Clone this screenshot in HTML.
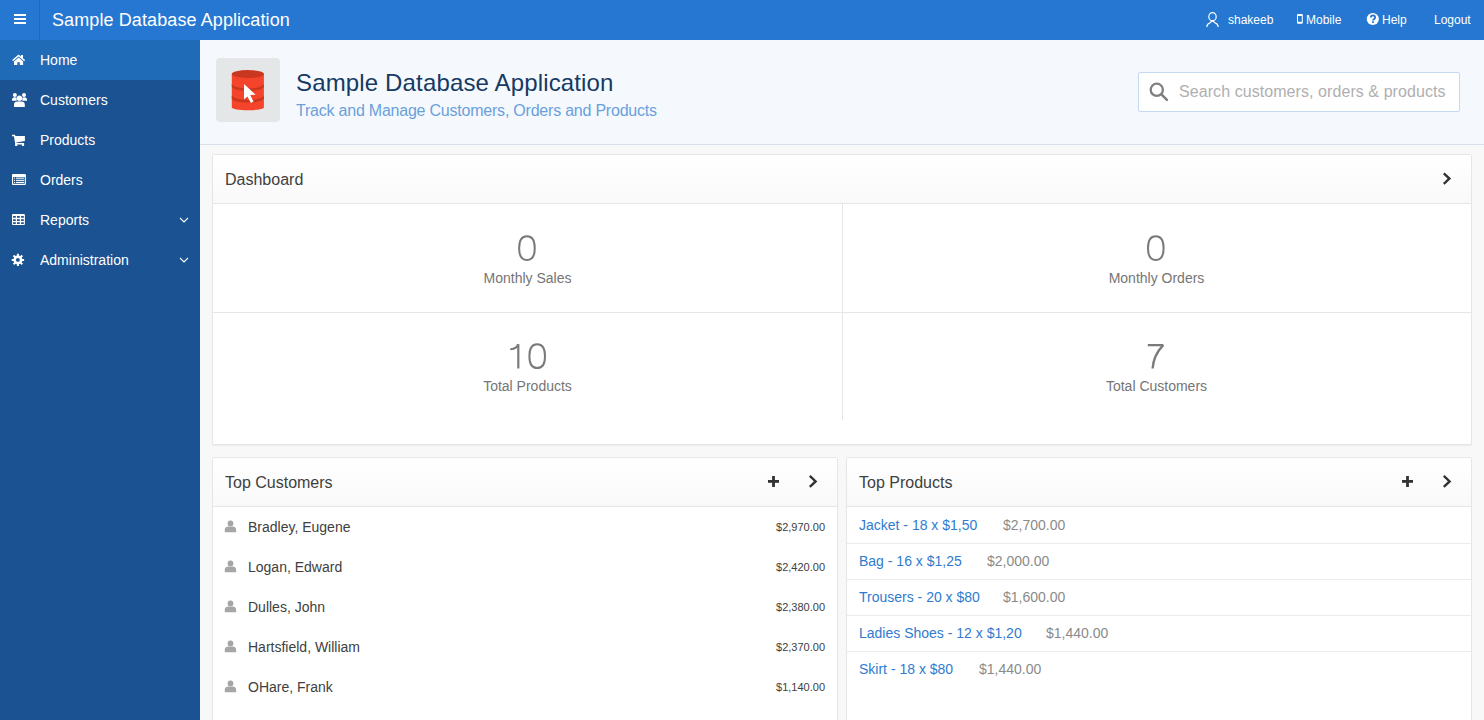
<!DOCTYPE html>
<html><head><meta charset="utf-8">
<style>
*{box-sizing:border-box;margin:0;padding:0}
html,body{width:1484px;height:720px;overflow:hidden}
body{font-family:"Liberation Sans",sans-serif;background:#f8f8f8;position:relative;color:#404040}
.abs{position:absolute}
#hdr{left:0;top:0;width:1484px;height:40px;background:#2577d1}
#hamb{left:0;top:0;width:39px;height:40px}
#hamb i{position:absolute;left:14px;width:12px;height:2px;background:#fff}
#hsep{left:39px;top:0;width:1px;height:40px;background:#2169bd}
#htitle{left:52px;top:9px;font-size:18px;color:#fff;line-height:22px;white-space:nowrap;letter-spacing:0.1px}
.nav{top:12px;font-size:12px;color:#fff;line-height:16px;white-space:nowrap}
#side{left:0;top:40px;width:200px;height:680px;background:#1b5291}
.si{position:absolute;left:0;width:200px;height:40px;color:#fff;font-size:14px;line-height:40px}
.si span{position:absolute;left:40px;top:0}
.si.act{background:#206bb8}
.si svg{position:absolute}
#hero{left:200px;top:40px;width:1284px;height:105px;background:#f5f9fe;border-bottom:1px solid #d9dfe6}
#ibox{left:216px;top:58px;width:64px;height:64px;border-radius:4px;background:#e4e6e8}
#t1{left:296px;top:68px;font-size:24px;color:#163a62;line-height:30px;white-space:nowrap;letter-spacing:0.15px}
#t2{left:296px;top:101px;font-size:16px;color:#6aa0da;line-height:20px;white-space:nowrap;letter-spacing:-0.22px}
#search{left:1138px;top:72px;width:322px;height:40px;background:#fff;border:1px solid #c5d9f1;border-radius:2px}
#search span{position:absolute;left:40px;top:9px;font-size:16px;color:#afafaf;letter-spacing:0.07px;line-height:20px;white-space:nowrap}
.reg{position:absolute;background:#fff;border:1px solid #e6e6e6;border-radius:2px;box-shadow:0 1px 1px rgba(0,0,0,.05)}
.rh{position:absolute;left:0;top:0;right:0;height:49px;background:linear-gradient(#fff,#f9f9f9);border-bottom:1px solid #e6e6e6}
.rh span{position:absolute;left:12px;top:15px;font-size:16px;line-height:20px;color:#404040;white-space:nowrap}
.big{position:absolute;width:629px;text-align:center;color:#757575}
.big.lbl{font-size:14px;line-height:18px}
.big b{display:block;font-weight:normal;font-size:36px;line-height:36px}
.big span{display:block;font-size:14px;line-height:18px}
.cust{position:absolute;left:35px;font-size:14px;color:#404040;line-height:18px;white-space:nowrap}
.amt{position:absolute;right:12px;font-size:11px;color:#404040;line-height:14px;white-space:nowrap}
.prow{position:absolute;left:0;right:0;height:36px;border-bottom:1px solid #ebebeb}
.prow a{position:absolute;left:12px;top:8px;font-size:14px;color:#2f7bcf;line-height:18px;text-decoration:none;white-space:nowrap}
.prow span{position:absolute;top:8px;font-size:14px;color:#8a8a8a;line-height:18px;white-space:nowrap}
</style></head><body>
<div id="hdr" class="abs"></div>
<div id="hamb" class="abs"><i style="top:14px"></i><i style="top:18px"></i><i style="top:22px"></i></div>
<div id="hsep" class="abs"></div>
<div id="htitle" class="abs">Sample Database Application</div>
<div class="abs nav" style="left:1228px">shakeeb</div>
<div class="abs nav" style="left:1306px">Mobile</div>
<div class="abs nav" style="left:1382px">Help</div>
<div class="abs nav" style="left:1434px">Logout</div>

<div id="side" class="abs">
 <div class="si act" style="top:0"><span>Home</span></div>
 <div class="si" style="top:40px"><span>Customers</span></div>
 <div class="si" style="top:80px"><span>Products</span></div>
 <div class="si" style="top:120px"><span>Orders</span></div>
 <div class="si" style="top:160px"><span>Reports</span></div>
 <div class="si" style="top:200px"><span>Administration</span></div>
</div>

<div id="hero" class="abs"></div>
<div id="ibox" class="abs"></div>
<div id="t1" class="abs">Sample Database Application</div>
<div id="t2" class="abs">Track and Manage Customers, Orders and Products</div>
<div id="search" class="abs"><span>Search customers, orders &amp; products</span></div>

<div class="reg" style="left:212px;top:154px;width:1260px;height:291px">
 <div class="rh"><span>Dashboard</span></div>
 <div class="abs" style="left:629px;top:49px;width:1px;height:216px;background:#e6e6e6"></div>
 <div class="abs" style="left:0;top:157px;width:1258px;height:1px;background:#e6e6e6"></div>
 <div class="big lbl" style="left:0;top:114px">Monthly Sales</div>
 <div class="big lbl" style="left:629px;top:114px">Monthly Orders</div>
 <div class="big lbl" style="left:0;top:222px">Total Products</div>
 <div class="big lbl" style="left:629px;top:222px">Total Customers</div>
</div>

<div class="reg" style="left:212px;top:457px;width:626px;height:300px">
 <div class="rh"><span>Top Customers</span></div>
 <div class="cust" style="top:60px">Bradley, Eugene</div><div class="amt" style="top:62px">$2,970.00</div>
 <div class="cust" style="top:100px">Logan, Edward</div><div class="amt" style="top:102px">$2,420.00</div>
 <div class="cust" style="top:140px">Dulles, John</div><div class="amt" style="top:142px">$2,380.00</div>
 <div class="cust" style="top:180px">Hartsfield, William</div><div class="amt" style="top:182px">$2,370.00</div>
 <div class="cust" style="top:220px">OHare, Frank</div><div class="amt" style="top:222px">$1,140.00</div>
</div>

<div class="reg" style="left:846px;top:457px;width:626px;height:300px">
 <div class="rh"><span>Top Products</span></div>
 <div class="prow" style="top:50px"><a>Jacket - 18 x $1,50</a><span style="left:156px">$2,700.00</span></div>
 <div class="prow" style="top:86px"><a>Bag - 16 x $1,25</a><span style="left:140px">$2,000.00</span></div>
 <div class="prow" style="top:122px"><a>Trousers - 20 x $80</a><span style="left:156px">$1,600.00</span></div>
 <div class="prow" style="top:158px"><a>Ladies Shoes - 12 x $1,20</a><span style="left:199px">$1,440.00</span></div>
 <div class="prow" style="top:194px;border-bottom:0"><a>Skirt - 18 x $80</a><span style="left:132px">$1,440.00</span></div>
</div>

<svg class="abs" style="left:0;top:0" width="1484" height="720" viewBox="0 0 1484 720">
 <!-- header icons -->
 <g fill="none" stroke="#fff" stroke-width="1.2">
  <ellipse cx="1212.5" cy="16.7" rx="3.7" ry="4.1"/>
  <path d="M1206.8 27 C1207 24.5 1207.6 23.6 1209.8 23 L1212.5 20.6 L1215.2 23 C1217.4 23.6 1218 24.5 1218.2 27"/>
 </g>
 <g fill="#fff">
  <path d="M1297 15 a1 1 0 0 1 1 -1 h3.8 a1 1 0 0 1 1 1 v7.8 a1 1 0 0 1 -1 1 h-3.8 a1 1 0 0 1 -1 -1 z M1298 16 v5.8 h3.8 v-5.8 z" fill-rule="evenodd"/>
  <circle cx="1372.8" cy="19" r="6.1"/>
 </g>
 <path d="M1370.8 17.4 a2.15 2.05 0 1 1 3.3 1.75 c-0.8 0.45 -1.05 0.75 -1.05 1.45" fill="none" stroke="#2577d1" stroke-width="1.9"/>
 <rect x="1372" y="21.3" width="1.9" height="1.6" fill="#2577d1"/>
 <!-- sidebar icons -->
 <g fill="#fff">
  <path d="M12.6 60.6 L18.6 55.4 L24.6 60.6" fill="none" stroke="#fff" stroke-width="1.4"/>
  <rect x="21" y="55" width="2" height="3.5"/>
  <path d="M14 61.6 L18.6 57.6 L23.1 61.6 V65 H19.8 V62.2 H17.3 V65 H14 Z"/>
  <!-- users -->
  <circle cx="14.9" cy="94.9" r="2"/>
  <circle cx="24" cy="94.9" r="2"/>
  <path d="M12 100.8 C11.8 98.5 12.5 97.2 14.9 97.2 C15.8 97.2 16.3 97.5 16.6 97.8 L16.6 100.8 Z"/>
  <path d="M27 100.8 C27.2 98.5 26.5 97.2 24 97.2 C23.1 97.2 22.6 97.5 22.3 97.8 L22.3 100.8 Z"/>
  <circle cx="19.4" cy="98.2" r="2.7"/>
  <path d="M14 106.9 V104.5 C14 102.4 15.3 101.4 17.3 101.4 H21.5 C23.5 101.4 24.8 102.4 24.8 104.5 V106.9 Z"/>
  <!-- cart -->
  <path d="M12 134.8 H15 L15.4 135.9 H24.9 V141.1 L16.4 142.5 L16.6 143.1 H24.1 V146 H21.9 V144.4 H17.3 V146 H15.1 V142.9 L13.9 136.3 H12 Z"/>
  <!-- list alt -->
  <path d="M13 173.9 H24.9 A1 1 0 0 1 25.9 174.9 V184 A1 1 0 0 1 24.9 185 H13 A1 1 0 0 1 12 184 V174.9 A1 1 0 0 1 13 173.9 Z M13.1 177.1 V183.8 H24.8 V177.1 Z" fill-rule="evenodd"/>
  <rect x="14" y="177.6" width="1.1" height="1.1"/><rect x="14" y="179.8" width="1.1" height="1.1"/><rect x="14" y="181.9" width="1.1" height="1.1"/>
  <rect x="16" y="177.6" width="8.1" height="1.1"/><rect x="16" y="179.8" width="8.1" height="1.1"/><rect x="16" y="181.9" width="8.1" height="1.1"/>
  <!-- table -->
  <path d="M13 213.9 H23.9 A1 1 0 0 1 24.9 214.9 V223.9 A1 1 0 0 1 23.9 224.9 H13 A1 1 0 0 1 12 223.9 V214.9 A1 1 0 0 1 13 213.9 Z
   M13.1 216.1 v1.7 h2.7 v-1.7 z M17 216.1 v1.7 h2.8 v-1.7 z M21.1 216.1 v1.7 h2.7 v-1.7 z
   M13.1 219.2 v1.7 h2.7 v-1.7 z M17 219.2 v1.7 h2.8 v-1.7 z M21.1 219.2 v1.7 h2.7 v-1.7 z
   M13.1 222.2 v1.7 h2.7 v-1.7 z M17 222.2 v1.7 h2.8 v-1.7 z M21.1 222.2 v1.7 h2.7 v-1.7 z" fill-rule="evenodd"/>
 </g>
 <!-- cog -->
 <g transform="translate(17.9 259.9)">
  <path fill="#fff" fill-rule="evenodd" d="M-1 -6.2 H1 V-4.4 L2.5 -3.8 L3.7 -5.1 L5.1 -3.7 L3.8 -2.5 L4.4 -1 H6.2 V1 H4.4 L3.8 2.5 L5.1 3.7 L3.7 5.1 L2.5 3.8 L1 4.4 V6.2 H-1 V4.4 L-2.5 3.8 L-3.7 5.1 L-5.1 3.7 L-3.8 2.5 L-4.4 1 H-6.2 V-1 H-4.4 L-3.8 -2.5 L-5.1 -3.7 L-3.7 -5.1 L-2.5 -3.8 L-1 -4.4 Z M0 -1.95 A1.95 1.95 0 1 0 0 1.95 A1.95 1.95 0 1 0 0 -1.95 Z"/>
 </g>
 <g fill="none" stroke="#fff" stroke-width="1.1">
  <path d="M180 218 L184 222 L188 218"/>
  <path d="M180 258 L184 262 L188 258"/>
 </g>
 <!-- hero db icon -->
 <path d="M231.8 74 V107.6 C231.8 109.2 239 110.3 247.9 110.3 C256.8 110.3 263.9 109.2 263.9 107.6 V74 Z" fill="#f4442b"/>
 <ellipse cx="247.9" cy="74" rx="16.1" ry="3.9" fill="#c9371f"/>
 <path d="M231.8 84 C233 86.6 240 88.4 247.9 88.4 C255.8 88.4 262.8 86.6 263.9 84 V86.8 C262.8 89.4 255.8 90.9 247.9 90.9 C240 90.9 233 89.4 231.8 86.8 Z" fill="#c9371f"/>
 <path d="M231.8 95.6 C233 98.2 240 100 247.9 100 C255.8 100 262.8 98.2 263.9 95.6 V98.4 C262.8 101 255.8 102.5 247.9 102.5 C240 102.5 233 101 231.8 98.4 Z" fill="#c9371f"/>
 <path d="M244 83.9 V99.4 L247.4 96.4 L250.9 103 L253.5 101.6 L250.2 95 L255.6 94.7 Z" fill="#fff"/>
 <!-- search icon -->
 <g fill="none" stroke="#808080" stroke-width="2.3">
  <circle cx="1156.8" cy="89.8" r="6.1"/>
  <path d="M1161.4 94.4 L1166.9 99.9" stroke-width="2.6" stroke-linecap="round"/>
 </g>
 <!-- region header icons -->
 <g fill="none" stroke="#333" stroke-width="2.4" stroke-linecap="butt">
  <path d="M1443.8 173.3 L1449.4 178.6 L1443.8 183.9"/>
  <path d="M809.8 475.9 L815.6 481.4 L809.8 486.9"/>
  <path d="M1443.8 475.9 L1449.6 481.4 L1443.8 486.9"/>
 </g>
 <g fill="#333">
  <rect x="772.1" y="476" width="2.8" height="11"/><rect x="768" y="480" width="11" height="2.8"/>
  <rect x="1406.1" y="476" width="2.8" height="11"/><rect x="1402" y="480" width="11" height="2.8"/>
 </g>
 <!-- customer icons -->
 <g fill="#a6a6a6">
  <circle cx="230.5" cy="523.4" r="2.9"/><path d="M224.8 532.2 V529.6 C224.8 527.6 226.4 526.6 228.4 526.6 H232.6 C234.6 526.6 236.1 527.6 236.1 529.6 V532.2 Z"/>
  <circle cx="230.5" cy="563.4" r="2.9"/><path d="M224.8 572.2 V569.6 C224.8 567.6 226.4 566.6 228.4 566.6 H232.6 C234.6 566.6 236.1 567.6 236.1 569.6 V572.2 Z"/>
  <circle cx="230.5" cy="603.4" r="2.9"/><path d="M224.8 612.2 V609.6 C224.8 607.6 226.4 606.6 228.4 606.6 H232.6 C234.6 606.6 236.1 607.6 236.1 609.6 V612.2 Z"/>
  <circle cx="230.5" cy="643.4" r="2.9"/><path d="M224.8 652.2 V649.6 C224.8 647.6 226.4 646.6 228.4 646.6 H232.6 C234.6 646.6 236.1 647.6 236.1 649.6 V652.2 Z"/>
  <circle cx="230.5" cy="683.4" r="2.9"/><path d="M224.8 692.2 V689.6 C224.8 687.6 226.4 686.6 228.4 686.6 H232.6 C234.6 686.6 236.1 687.6 236.1 689.6 V692.2 Z"/>
 </g>

 <!-- dashboard digits (light weight) -->
 <g fill="none" stroke="#7a7a7a" stroke-width="2.0">
  <path d="M526.95 236.35 C531.94 236.35 534.75 240.62 534.75 248.20 C534.75 255.78 531.94 260.05 526.95 260.05 C521.96 260.05 519.15 255.78 519.15 248.20 C519.15 240.62 521.96 236.35 526.95 236.35 Z"/>
  <path d="M1155.80 236.30 C1160.79 236.30 1163.60 240.57 1163.60 248.15 C1163.60 255.73 1160.79 260.00 1155.80 260.00 C1150.81 260.00 1148.00 255.73 1148.00 248.15 C1148.00 240.57 1150.81 236.30 1155.80 236.30 Z"/>
  <path d="M537.20 344.30 C542.19 344.30 545.00 348.58 545.00 356.20 C545.00 363.82 542.19 368.10 537.20 368.10 C532.21 368.10 529.40 363.82 529.40 356.20 C529.40 348.58 532.21 344.30 537.20 344.30 Z"/>
  <path d="M518.3 368.5 V344.2" stroke-width="2.2"/>
  <path d="M510.3 349.2 C513.5 349 517.4 348.2 518 344" stroke-width="1.9"/>
  <path d="M1147.8 345.1 H1163.2 C1156.6 352 1153.2 359 1152.6 368.5" stroke-width="2.3" stroke-linejoin="bevel"/>
 </g>
</svg>
</body></html>
